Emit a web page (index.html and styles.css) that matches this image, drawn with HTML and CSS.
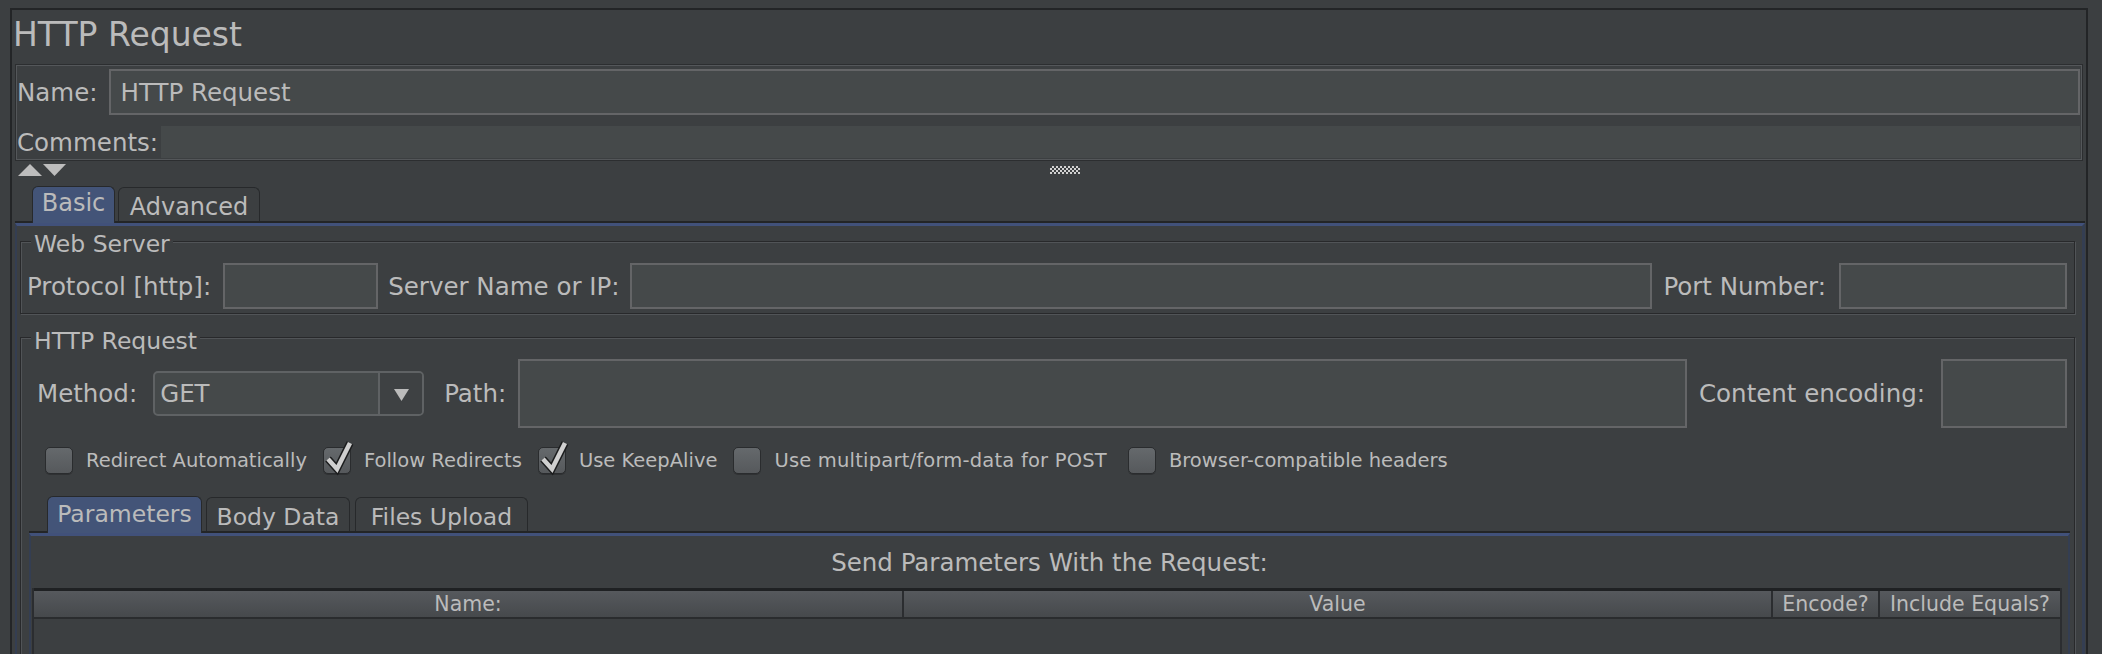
FILE: index.html
```html
<!DOCTYPE html>
<html>
<head>
<meta charset="utf-8">
<title>HTTP Request</title>
<link rel="stylesheet" href="styles.css">
</head>
<body>
<div class="frame">
  <div class="title">HTTP Request</div>

  <div class="name-panel">
    <div class="np-row np-name">
      <span class="lbl lbl-name">Name:</span>
      <div class="field field-name">HTTP Request</div>
    </div>
    <div class="np-row np-comments">
      <span class="lbl lbl-comments">Comments:</span>
      <div class="field field-comments"></div>
    </div>
  </div>

  <div class="split-row">
    <svg class="arrows" width="48" height="12" viewBox="0 0 48 12"><polygon points="0,12 24,12 12,0"/><polygon points="25,0 48,0 36.5,12"/></svg>
    <div class="grip"></div>
  </div>

  <div class="tabpane">
    <div class="tabstrip">
      <div class="tab sel t-basic">Basic</div>
      <div class="tab t-adv">Advanced</div>
    </div>
    <div class="tabbody">
      <fieldset class="group g-web">
        <legend>Web Server</legend>
        <div class="web-row">
          <span class="lbl m-proto">Protocol [http]:</span>
          <div class="field f-proto"></div>
          <span class="lbl m-server">Server Name or IP:</span>
          <div class="field f-server"></div>
          <span class="lbl m-port">Port Number:</span>
          <div class="field f-port"></div>
        </div>
      </fieldset>

      <fieldset class="group g-http">
        <legend>HTTP Request</legend>
        <div class="req-row">
          <span class="lbl m-method">Method:</span>
          <div class="combo">
            <span class="combo-text">GET</span>
            <span class="combo-btn"><svg width="15" height="12" viewBox="0 0 15 12"><polygon points="0,0 15,0 7.5,12"/></svg></span>
          </div>
          <span class="lbl m-path">Path:</span>
          <div class="field f-path"></div>
          <span class="lbl m-enc">Content encoding:</span>
          <div class="field f-enc"></div>
        </div>

        <div class="cb-row">
          <div class="cb-item"><span class="cb"></span><span class="cb-lbl">Redirect Automatically</span></div>
          <div class="cb-item"><span class="cb"><svg width="36" height="36" viewBox="0 0 36 36"><polyline class="ck-dark" points="7,20 16,30 29,4"/><polyline class="ck-light" points="7,20 16,30 29,4"/></svg></span><span class="cb-lbl">Follow Redirects</span></div>
          <div class="cb-item"><span class="cb"><svg width="36" height="36" viewBox="0 0 36 36"><polyline class="ck-dark" points="7,20 16,30 29,4"/><polyline class="ck-light" points="7,20 16,30 29,4"/></svg></span><span class="cb-lbl">Use KeepAlive</span></div>
          <div class="cb-item"><span class="cb"></span><span class="cb-lbl cb-wide">Use multipart/form-data for POST</span></div>
          <div class="cb-item"><span class="cb"></span><span class="cb-lbl">Browser-compatible headers</span></div>
        </div>

        <div class="ptabs">
          <div class="tabstrip ptabstrip">
            <div class="tab ptab sel t-params">Parameters</div>
            <div class="tab ptab t-body">Body Data</div>
            <div class="tab ptab t-files">Files Upload</div>
          </div>
          <div class="pbody">
            <div class="send-label">Send Parameters With the Request:</div>
            <div class="ptable">
              <div class="thead">
                <div class="th">Name:</div>
                <div class="th">Value</div>
                <div class="th">Encode?</div>
                <div class="th">Include Equals?</div>
              </div>
              <div class="tbody"></div>
            </div>
          </div>
        </div>
      </fieldset>
    </div>
  </div>
</div>
</body>
</html>
```

FILE: styles.css
```css
html, body {
  margin: 0;
  padding: 0;
}
body {
  background: #3c3f41;
  color: #bbbbbb;
  font-family: "DejaVu Sans", "Noto Sans", sans-serif;
  height: 654px;
  overflow: hidden;
}

.frame {
  margin: 8px 0 0 10px;
  width: 2078px;
  height: 646px;
  box-sizing: border-box;
  border: 2px solid #232527;
  border-bottom: 0;
}

.title {
  height: 54px;
  box-sizing: border-box;
  padding: 5px 0 0 1px;
  font-size: 33px;
  line-height: 40px;
  white-space: nowrap;
}

/* name / comments */
.name-panel {
  margin: 0 3px;
  border: 1px solid #2c2e30;
  box-shadow: inset 0 0 0 1px #54575a;
  padding: 4px 2px 2px 1px;
}
.np-row {
  display: flex;
  align-items: center;
}
.np-name { height: 46px; }
.np-comments { height: 32px; margin-top: 11px; }
.lbl {
  font-size: 24.5px;
  white-space: nowrap;
  flex: none;
}
.lbl-name { margin-right: 11px; }
.lbl-comments { margin-right: 3px; }

.field {
  box-sizing: border-box;
  background: #45494a;
  border: 2px solid #646567;
  height: 100%;
}
.field-name {
  flex: 1;
  padding-left: 10px;
  display: flex;
  align-items: center;
  font-size: 24.5px;
  white-space: nowrap;
}
.field-comments {
  flex: 1;
  border: 0;
}

/* splitter */
.split-row {
  height: 25px;
  box-sizing: border-box;
  padding: 3px 0 0 6px;
  display: flex;
  align-items: flex-start;
}
.arrows {
  display: block;
  fill: #bdbdbd;
  flex: none;
}
.grip {
  width: 30px;
  height: 8px;
  margin: 2px 0 0 984px;
  background: repeating-conic-gradient(#d2d2d2 0 25%, transparent 0 50%) 0 0 / 4px 4px;
}

/* tabs */
.tabpane {
  margin: 0 1px 0 3px;
}
.tabstrip {
  height: 37px;
  box-sizing: border-box;
  display: flex;
  align-items: flex-end;
  padding-left: 17px;
  box-shadow: inset 0 -2px 0 #232527;
}
.tab {
  box-sizing: border-box;
  height: 34px;
  margin: 0 3px 2px 0;
  border: 1px solid #27292b;
  border-bottom: 0;
  border-radius: 6px 6px 0 0;
  display: flex;
  align-items: center;
  justify-content: center;
  font-size: 24px;
  padding-top: 4px;
  white-space: nowrap;
  flex: none;
}
.tab.sel {
  height: 37px;
  margin-bottom: 0;
  background: #435478;
  padding-top: 0;
  padding-bottom: 4px;
}
.t-basic { width: 83px; }
.t-adv { width: 142px; }

.tabbody {
  border-top: 3px solid #41517a;
  border-left: 2px solid #343e52;
  border-right: 3px solid #343e52;
  height: 460px;
}

/* titled groups */
.group {
  margin: 2px 7px 0 3px;
  padding: 0;
  min-width: 0;
  border: 1px solid #28292b;
  box-shadow: inset 1px 1px 0 #515457, 1px 1px 0 #515457;
}
.group legend {
  font-size: 23.5px;
  line-height: 20px;
  padding: 6px 3px 0;
  margin-left: 10px;
  background: #3c3f41;
  white-space: nowrap;
}
.g-web {
  padding: 9px 7px 4px 6px;
}
.g-web legend {
  margin-left: 4px;
}
.web-row {
  height: 46px;
  display: flex;
  align-items: center;
}
.m-proto { margin-right: 12px; }
.f-proto { width: 155px; flex: none; margin-right: 10px; }
.m-server { margin-right: 10px; }
.f-server { flex: 1; margin-right: 11px; }
.m-port { margin-right: 13px; }
.f-port { width: 228px; flex: none; }

.g-http {
  margin-top: 10.5px;
  padding: 8.5px 0 0 0;
}
.req-row {
  height: 69px;
  display: flex;
  align-items: center;
  padding: 0 7px 0 16px;
}
.m-method { margin-right: 16px; }
.combo {
  box-sizing: border-box;
  width: 271px;
  height: 45px;
  flex: none;
  border: 2px solid #5f6264;
  border-radius: 5px;
  background: #45494a;
  display: flex;
  align-items: stretch;
  margin-right: 20px;
  overflow: hidden;
}
.combo-text {
  flex: 1;
  display: flex;
  align-items: center;
  padding-left: 5px;
  font-size: 24.5px;
}
.combo-btn {
  width: 42px;
  border-left: 2px solid #5f6264;
  background: #3e4143;
  display: flex;
  align-items: center;
  justify-content: center;
}
.combo-btn svg {
  display: block;
  fill: #bbbbbb;
  margin-top: 2px;
}
.m-path { margin-right: 12px; }
.f-path { flex: 1; margin-right: 12px; }
.m-enc { margin-right: 16px; }
.f-enc { width: 126px; flex: none; }

/* checkboxes */
.cb-row {
  margin-top: 18px;
  height: 28px;
  display: flex;
  align-items: center;
  padding-left: 24px;
}
.cb-item {
  display: flex;
  align-items: center;
  margin-right: 16px;
}
.cb {
  position: relative;
  flex: none;
  box-sizing: border-box;
  width: 28px;
  height: 27px;
  border: 1px solid #2a2c2e;
  border-radius: 5px;
  background: linear-gradient(#65696c, #56595c);
  box-shadow: 0 1px 0 #2f3133;
  margin-right: 13px;
}
.cb svg {
  position: absolute;
  left: -3px;
  top: -9px;
  overflow: visible;
}
.ck-dark {
  fill: none;
  stroke: #1c1d1e;
  stroke-width: 7.5;
  stroke-linejoin: miter;
}
.ck-light {
  fill: none;
  stroke: #d0d0d0;
  stroke-width: 4.5;
  stroke-linejoin: miter;
}
.cb-lbl {
  font-size: 19.5px;
  white-space: nowrap;
}
.cb-wide {
  letter-spacing: 0.2px;
  margin-right: 5px;
}

/* parameters tabs */
.ptabs {
  margin: 22px 4px 0 8px;
}
.ptabstrip {
  padding-left: 18px;
}
.ptab {
  font-size: 23.5px;
  margin-right: 4px;
}
.ptab.sel { padding-bottom: 3px; }
.t-params { width: 155px; }
.t-body { width: 144px; margin-right: 5px; }
.t-files { width: 173px; }

.pbody {
  border-top: 3px solid #41517a;
  border-left: 2px solid #343e52;
  border-right: 2px solid #343e52;
}
.send-label {
  height: 52px;
  box-sizing: border-box;
  padding-top: 2px;
  line-height: 50px;
  text-align: center;
  font-size: 24.5px;
  white-space: nowrap;
}
.ptable {
  margin: 0 6px 0 1px;
  border-left: 2px solid #2b2d30;
  border-right: 2px solid #2b2d30;
}
.thead {
  display: grid;
  grid-template-columns: 868px 869px 107px 182px;
  height: 31px;
  box-sizing: border-box;
  border-top: 3px solid #1f2123;
  border-bottom: 2px solid #2a2c2e;
  background: linear-gradient(#56595d, #46494c);
}
.th {
  display: flex;
  align-items: center;
  justify-content: center;
  font-size: 20.5px;
  white-space: nowrap;
}
.th + .th {
  border-left: 2px solid #2b2d30;
}
.tbody {
  height: 60px;
}
```
